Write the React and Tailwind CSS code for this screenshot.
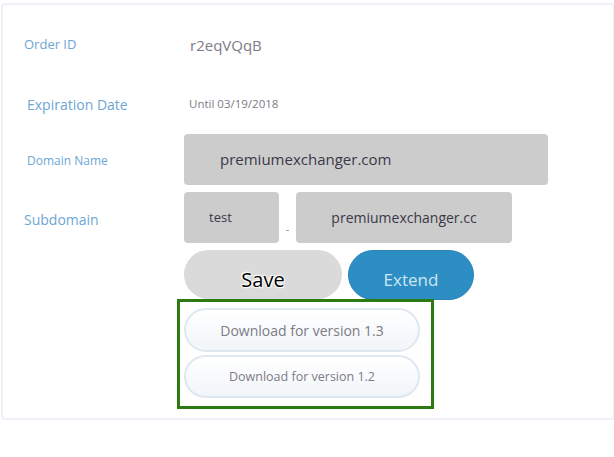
export default function App() {
  const font = { fontFamily: '"Open Sans", "Noto Sans", sans-serif' };
  return (
    <div className="w-[614px] h-[457px] bg-white overflow-hidden" style={font}>
      <div className="ml-[1px] mt-[3px] w-[614px] h-[417px] border-2 border-[#eef2f6] rounded-[4px] flex flex-col">
        <div className="mt-[27px] h-[26px] flex items-center">
          <div className="w-[181px] pl-[21px] text-[13px] text-[#6ea6d3]">Order ID</div>
          <div className="pl-[6px] text-[15px] text-[#7d7b86]">r2eqVQqB</div>
        </div>
        <div className="mt-[33px] h-[26px] flex items-center">
          <div className="w-[181px] pl-[24px] text-[14px] text-[#6ea6d3]">Expiration Date</div>
          <div className="pl-[5px] text-[11.5px] text-[#7d7b86]">Until 03/19/2018</div>
        </div>
        <div className="mt-[17px] h-[51px] flex items-center">
          <div className="w-[181px] pl-[24px] pt-[3px] text-[12px] text-[#6ea6d3]">Domain Name</div>
          <div className="w-[364px] h-[51px] bg-[#cccccc] rounded-[4px] flex items-center pl-[36px] text-[15px] text-[#3b3848]">
            premiumexchanger.com
          </div>
        </div>
        <div className="mt-[7px] h-[51px] flex items-center">
          <div className="w-[181px] pl-[21px] pt-[3px] text-[14px] text-[#6ea6d3]">Subdomain</div>
          <div className="w-[95px] h-[51px] bg-[#cccccc] rounded-[4px] flex items-center pl-[25px] text-[13px] text-[#3b3848]">
            test
          </div>
          <div className="w-[17px] h-[51px] flex items-end justify-center pb-[6px] text-[11px] text-[#888]">-</div>
          <div className="w-[216px] h-[51px] bg-[#cccccc] rounded-[4px] flex items-center justify-center text-[14px] text-[#3b3848]">
            premiumexchanger.cc
          </div>
        </div>
        <div className="mt-[7px] h-[50px] flex items-center">
          <div className="w-[181px]" />
          <div
            className="w-[158px] h-[49px] self-start bg-[#dadada] rounded-full flex items-center justify-center pt-[10px] text-[20px] text-black"
            style={{ textShadow: "0 0 2px #fff, 0 0 2px #fff, 0 0 3px #fff, 1px 1px 1px #fff, -1px -1px 1px #fff" }}
          >
            Save
          </div>
          <div className="ml-[6px] w-[126px] h-[50px] bg-[#2d8ec4] border border-[#2a84b8] rounded-full flex items-center justify-center pt-[10px] text-[17px] text-[#cfe6f2]">
            Extend
          </div>
        </div>
        <div className="mt-[-1px] ml-[174px] w-[257px] h-[110px] border-[3px] border-[#2b7a12] pl-[4px] pt-[6px] flex flex-col gap-[3px]">
          <div className="w-[236px] h-[44px] rounded-full border-2 border-[#dfe7ef] bg-gradient-to-b from-white to-[#f1f5f9] flex items-center justify-center text-[14px] text-[#7d7b86]">
            Download for version 1.3
          </div>
          <div className="w-[236px] h-[43px] rounded-full border-2 border-[#dfe7ef] bg-gradient-to-b from-white to-[#f1f5f9] flex items-center justify-center pt-[2px] text-[12.5px] text-[#7d7b86]">
            Download for version 1.2
          </div>
        </div>
      </div>
    </div>
  );
}
